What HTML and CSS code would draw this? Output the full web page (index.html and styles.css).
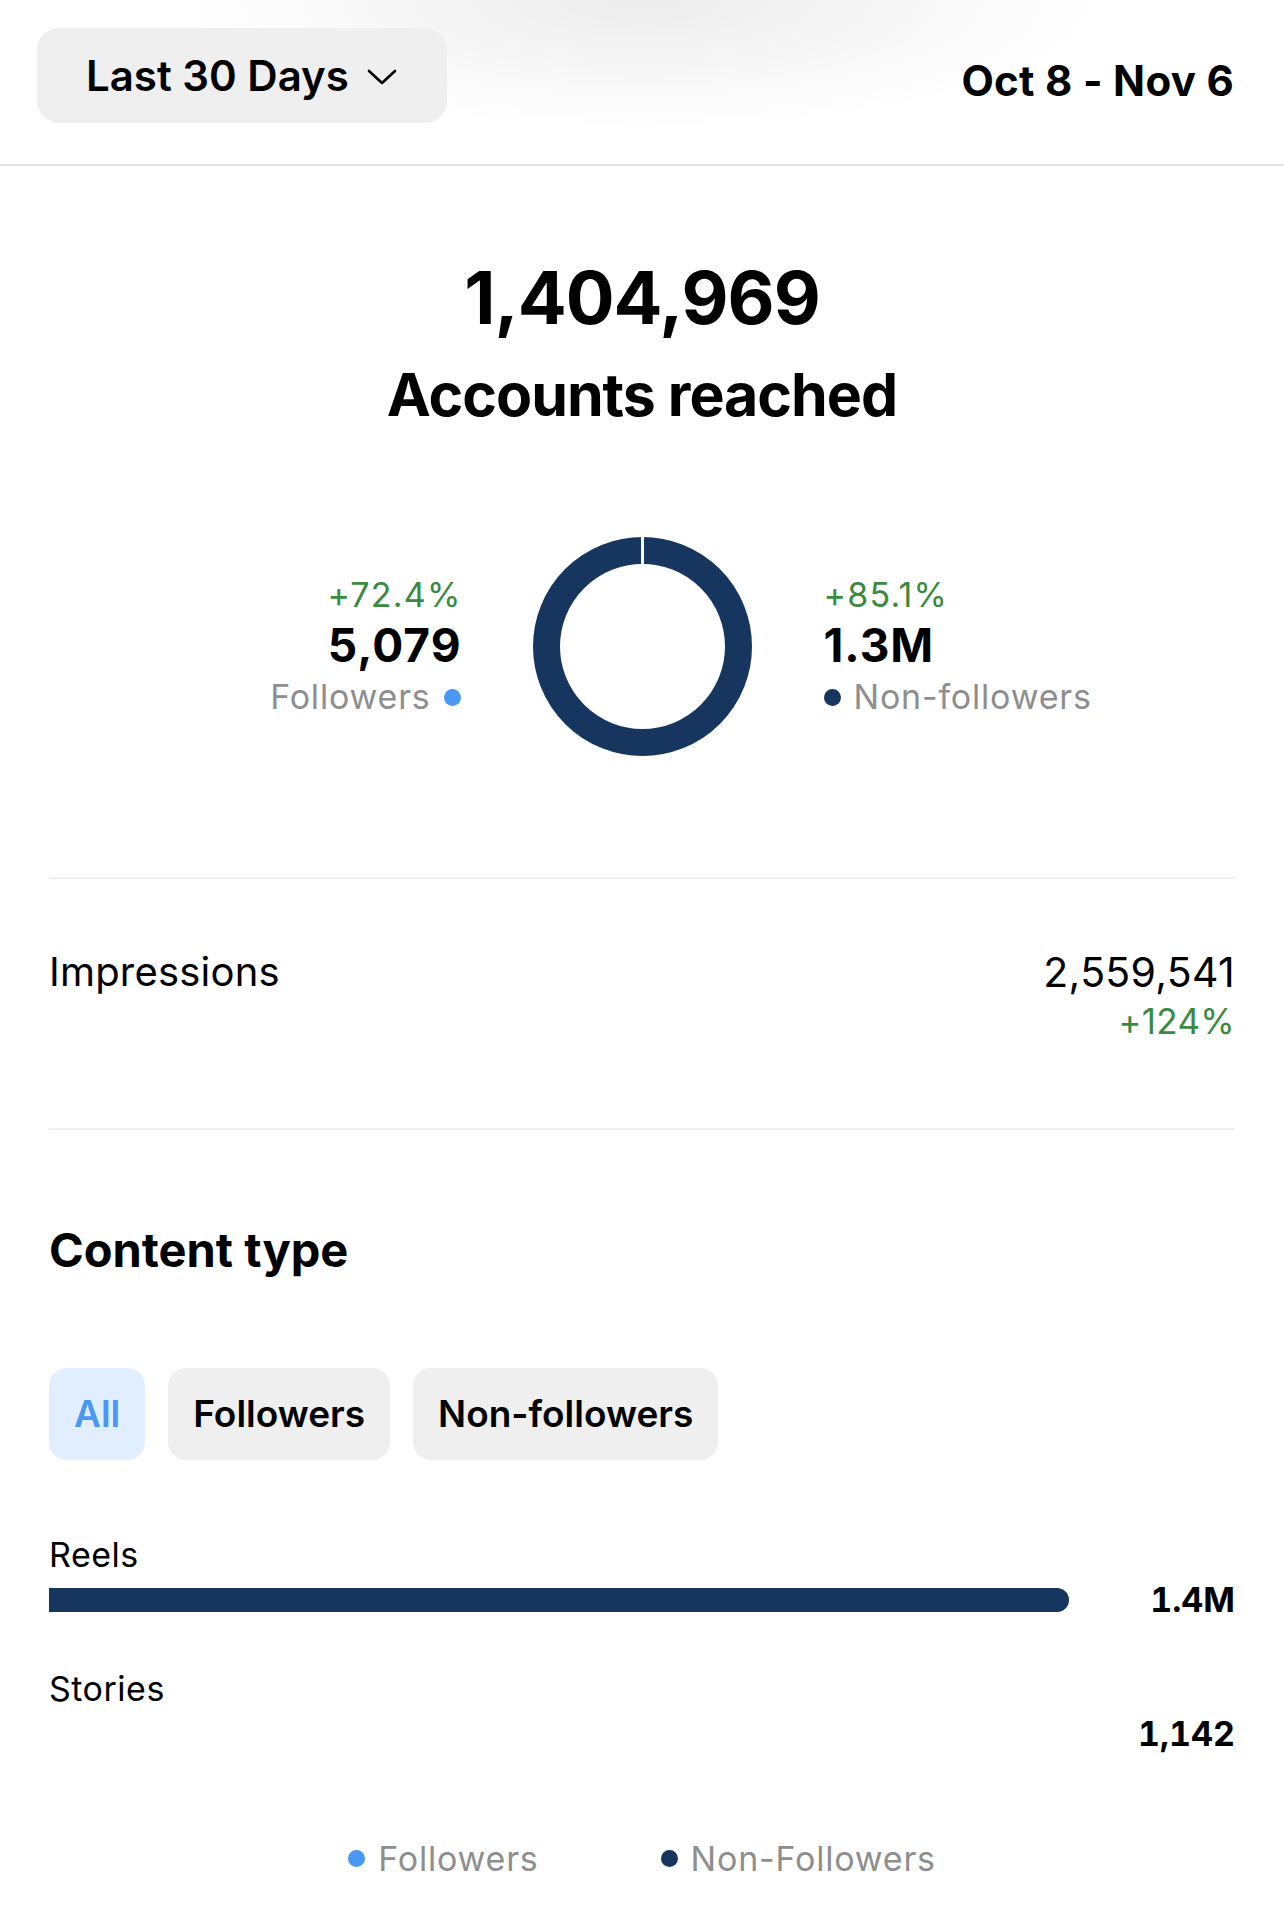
FILE: index.html
```html
<!DOCTYPE html>
<html lang="en">
<head>
<meta charset="utf-8">
<title>Insights - Accounts reached</title>
<link rel="stylesheet" href="styles.css">
</head>
<body>
<header class="topbar">
  <button class="range-btn">
    <span>Last 30 Days</span>
    <svg class="chev" width="30" height="16" viewBox="0 0 30 16"><path d="M2 2 L15 14 L28 2" fill="none" stroke="#000" stroke-width="2.6" stroke-linecap="round" stroke-linejoin="round"/></svg>
  </button>
  <div class="date-range">Oct 8 - Nov 6</div>
</header>

<main class="content">
  <section class="reach">
    <div class="reach-num">1,404,969</div>
    <div class="reach-title">Accounts reached</div>

    <div class="split">
      <div class="stat stat-left">
        <div class="delta">+72.4%</div>
        <div class="stat-num">5,079</div>
        <div class="stat-label">Followers <span class="dot dot-light"></span></div>
      </div>
      <svg class="donut" width="219" height="219" viewBox="0 0 219 219">
        <circle cx="109.5" cy="109.5" r="96" fill="none" stroke="#17365f" stroke-width="27"/>
        <rect x="108" y="0" width="3" height="30" fill="#fff"/>
      </svg>
      <div class="stat stat-right">
        <div class="delta">+85.1%</div>
        <div class="stat-num">1.3M</div>
        <div class="stat-label"><span class="dot dot-dark"></span> Non-followers</div>
      </div>
    </div>
  </section>

  <section class="impressions">
    <div class="imp-label">Impressions</div>
    <div class="imp-values">
      <div class="imp-num">2,559,541</div>
      <div class="imp-delta">+124%</div>
    </div>
  </section>

  <section class="ctype">
    <h2 class="ctype-title">Content type</h2>
    <div class="tabs">
      <div class="tab tab-active">All</div>
      <div class="tab">Followers</div>
      <div class="tab">Non-followers</div>
    </div>

    <div class="ct-list">
      <div class="ct-row">
        <div class="ct-label">Reels</div>
        <div class="ct-track"><div class="ct-bar" style="width:100%"></div></div>
        <div class="ct-value">1.4M</div>
      </div>
      <div class="ct-row">
        <div class="ct-label">Stories</div>
        <div class="ct-track"><div class="ct-bar" style="width:0%"></div></div>
        <div class="ct-value">1,142</div>
      </div>
    </div>

    <div class="legend">
      <div class="legend-item"><span class="dot dot-light"></span>Followers</div>
      <div class="legend-item"><span class="dot dot-dark"></span>Non-Followers</div>
    </div>
  </section>
</main>
</body>
</html>
```

FILE: styles.css
```css
* { box-sizing: border-box; }
html, body { margin: 0; padding: 0; background: #fff; }
body {
  font-family: "Inter", "Liberation Sans", sans-serif;
  color: #000;
  width: 1284px;
}

.topbar {
  height: 166px;
  display: flex;
  justify-content: space-between;
  align-items: flex-start;
  padding: 28px 50px 0 37px;
  border-bottom: 2px solid #e2e2e2;
  background: radial-gradient(ellipse 460px 130px at 50% 0, rgba(0,0,0,0.075), rgba(0,0,0,0) 100%);
}
.range-btn {
  height: 95px;
  width: 410px;
  border: none;
  border-radius: 22px;
  background: #efefef;
  display: flex;
  align-items: center;
  gap: 18px;
  padding: 0 0 0 49px;
  font-family: inherit;
  font-size: 42px;
  font-weight: 600;
  line-height: 1;
  color: #000;
}
.chev { display: block; margin-top: 2px; }
.date-range {
  margin-top: 32px;
  font-size: 42px;
  font-weight: 700;
  line-height: 1;
  letter-spacing: 0.3px;
}

.content { padding: 0 49px; }

.reach {
  text-align: center;
  padding-top: 96px;
  padding-bottom: 121px;
  border-bottom: 2px solid #efefef;
}
.reach-num {
  font-size: 72.5px;
  font-weight: 700;
  line-height: 1;
  letter-spacing: -1px;
}
.reach-title {
  margin-top: 30px;
  font-size: 59px;
  font-weight: 700;
  line-height: 1;
  letter-spacing: -1px;
}

.split {
  margin-top: 113px;
  display: grid;
  grid-template-columns: 1fr 219px 1fr;
  column-gap: 72px;
  align-items: center;
}
.donut { display: block; }
.stat-left { text-align: right; }
.stat-right { text-align: left; }
.delta {
  font-size: 34px;
  line-height: 1;
  letter-spacing: 1.2px;
  color: #3a8a3e;
}
.stat-left .delta { margin-right: -1px; }
.stat-num {
  margin-top: 10px;
  font-size: 46px;
  font-weight: 700;
  line-height: 1;
  letter-spacing: 1px;
}
.stat-left .stat-num { margin-right: -1px; }
.stat-label {
  margin-top: 12px;
  font-size: 34px;
  line-height: 1;
  letter-spacing: 0.8px;
  color: #8e8e8e;
  display: inline-flex;
  align-items: center;
  gap: 13px;
}
.dot {
  display: inline-block;
  width: 17px;
  height: 17px;
  border-radius: 50%;
  flex: none;
}
.dot-light { background: #4a98f1; }
.dot-dark { background: #17365f; }

.impressions {
  display: flex;
  justify-content: space-between;
  align-items: flex-start;
  padding-top: 73px;
  padding-bottom: 89px;
  border-bottom: 2px solid #efefef;
}
.imp-label {
  font-size: 40px;
  line-height: 1;
  letter-spacing: 0.2px;
}
.imp-values { text-align: right; }
.imp-num {
  font-size: 41px;
  line-height: 1;
  letter-spacing: 0.3px;
}
.imp-delta {
  margin-top: 11px;
  font-size: 35px;
  line-height: 1;
  letter-spacing: 0.3px;
  color: #3a8a3e;
}

.ctype { padding-top: 96px; }
.ctype-title {
  margin: 0;
  font-size: 47px;
  font-weight: 700;
  line-height: 1;
}
.tabs {
  margin-top: 95px;
  display: flex;
  gap: 23px;
}
.tab {
  height: 92px;
  padding: 0 25px;
  border-radius: 18px;
  background: #efefef;
  display: flex;
  align-items: center;
  font-size: 37px;
  font-weight: 600;
  line-height: 1;
}
.tab-active {
  background: #e1eefd;
  color: #4a98f1;
}

.ct-list { margin-top: 78px; }
.ct-row {
  display: grid;
  grid-template-columns: 1fr 166px;
  grid-template-rows: auto 24px;
  row-gap: 16px;
}
.ct-row + .ct-row { margin-top: 60px; }
.ct-label {
  grid-column: 1;
  grid-row: 1;
  font-size: 34px;
  line-height: 1;
  letter-spacing: 0.5px;
}
.ct-track {
  grid-column: 1;
  grid-row: 2;
  height: 24px;
}
.ct-bar {
  height: 24px;
  background: #17365f;
  border-radius: 0 12px 12px 0;
}
.ct-value {
  grid-column: 2;
  grid-row: 2;
  align-self: center;
  text-align: right;
  font-size: 34px;
  font-weight: 700;
  line-height: 1;
  font-variant-numeric: tabular-nums;
}

.legend {
  margin-top: 96px;
  display: flex;
  justify-content: center;
  gap: 122px;
  padding-bottom: 40px;
}
.legend-item {
  display: flex;
  align-items: center;
  gap: 13px;
  font-size: 34px;
  line-height: 1;
  letter-spacing: 0.8px;
  color: #8e8e8e;
}
```
